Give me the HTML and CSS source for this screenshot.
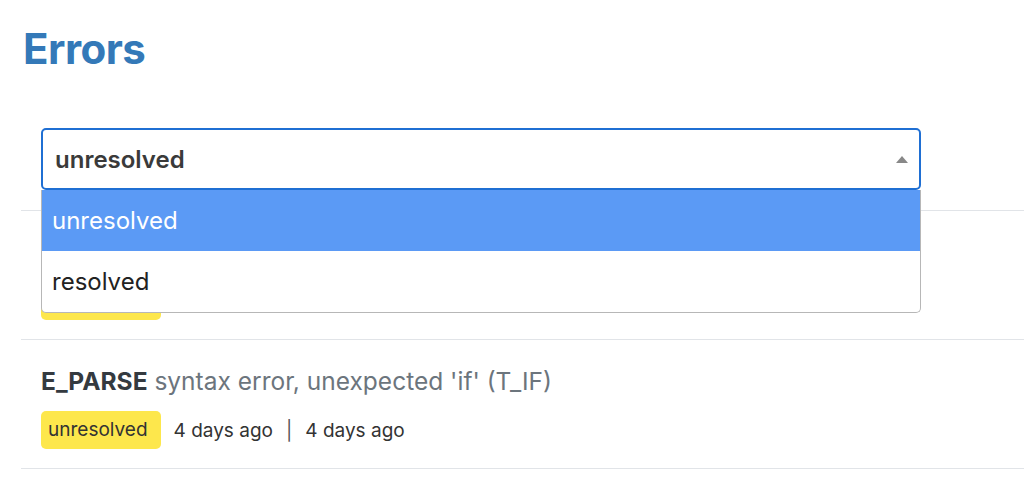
FILE: index.html
```html
<!DOCTYPE html>
<html lang="en">
<head>
<meta charset="utf-8">
<title>Errors</title>
<link rel="stylesheet" href="styles.css">
</head>
<body>
<div class="page">
  <h1 class="title">Errors</h1>
  <div class="filter">
    <div class="select">
      <span class="select-value">unresolved</span>
      <span class="arrow"></span>
    </div>
    <ul class="menu">
      <li class="option option-active">unresolved</li>
      <li class="option">resolved</li>
    </ul>
  </div>
  <ul class="errors">
    <li class="error">
      <div class="error-title"><strong class="error-type">E_WARNING</strong> <span class="error-msg">Undefined variable $user</span></div>
      <div class="meta"><span class="badge">unresolved</span><span class="dates">4 days ago<span class="sep">|</span>4 days ago</span></div>
    </li>
    <li class="error">
      <div class="error-title"><strong class="error-type">E_PARSE</strong> <span class="error-msg">syntax error, unexpected 'if' (T_IF)</span></div>
      <div class="meta"><span class="badge">unresolved</span><span class="dates">4 days ago<span class="sep">|</span>4 days ago</span></div>
    </li>
  </ul>
</div>
</body>
</html>
```
FILE: styles.css
```css
* { box-sizing: border-box; }
html, body { margin: 0; padding: 0; background: #fff; }
body {
  font-family: Inter, "Noto Sans", Arial, sans-serif;
  color: #333;
  overflow: hidden;
}
.page {
  padding-left: 21px;
}
.title {
  margin: 0;
  padding: 22px 0 0 2px;
  font-size: 42px;
  line-height: 54px;
  font-weight: 700;
  letter-spacing: -0.5px;
  color: #3479b8;
}
.filter {
  position: relative;
  margin: 52px 0 0 20px;
  width: 880px;
}
.select {
  height: 62px;
  border: 2px solid #1f6fd3;
  border-radius: 5px;
  display: flex;
  align-items: center;
  justify-content: space-between;
  padding: 0 10px 0 12px;
  background: #fff;
}
.select-value {
  font-size: 24px;
  font-weight: 600;
  color: #3a3a3a;
}
.arrow {
  width: 0;
  height: 0;
  border-left: 6px solid transparent;
  border-right: 6px solid transparent;
  border-bottom: 7px solid #888;
  margin-right: 1px;
}
.menu {
  position: absolute;
  left: 0;
  top: 62px;
  width: 880px;
  margin: 0;
  padding: 0;
  list-style: none;
  background: #fff;
  border: 1px solid #b7b7b7;
  border-top: none;
  border-radius: 0 0 5px 5px;
  z-index: 2;
  overflow: hidden;
}
.option {
  height: 61px;
  line-height: 61px;
  padding-left: 10px;
  font-size: 24px;
  color: #222;
}
.option-active {
  background: #5b9af5;
  color: #fff;
}
.errors {
  list-style: none;
  margin: 20px 0 0 0;
  padding: 0;
  border-top: 1px solid #e1e4e8;
}
.error {
  padding: 26px 0 19px 20px;
  border-bottom: 1px solid #e1e4e8;
}
.error-title {
  font-size: 24.5px;
  line-height: 30px;
  white-space: nowrap;
}
.error-type {
  font-weight: 700;
  color: #343a40;
}
.error-msg {
  color: #6c757d;
}
.meta {
  margin-top: 15px;
  display: flex;
  align-items: center;
  font-size: 19px;
  color: #333;
}
.badge {
  display: inline-block;
  height: 38px;
  line-height: 38px;
  padding: 0 13px 0 7px;
  font-size: 19px;
  background: #fde74c;
  border-radius: 5px;
  color: #333;
}
.dates {
  margin-left: 13px;
}
.sep {
  margin: 0 13px;
  color: #555;
}
```
